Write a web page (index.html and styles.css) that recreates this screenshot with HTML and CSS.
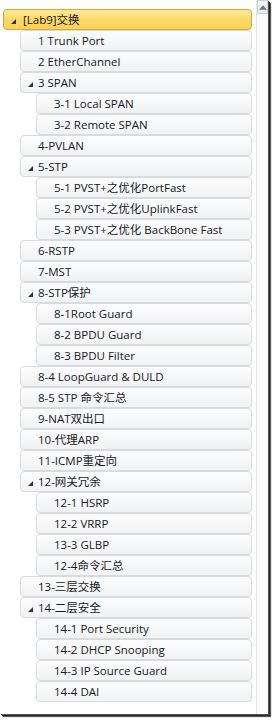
FILE: index.html
```html
<!DOCTYPE html>
<html>
<head>
<meta charset="utf-8">
<link rel="stylesheet" href="styles.css">
</head>
<body>
<div class="window">
  <div class="tree">
    <div class="node l0 sel"><svg class="tri" viewBox="0 0 5 5"><polygon points="5,0 5,5 0,5"/></svg><span class="txt">[Lab9]交换</span></div>
    <div class="node l1"><span class="txt">1 Trunk Port</span></div>
    <div class="node l1"><span class="txt">2 EtherChannel</span></div>
    <div class="node l1"><svg class="tri" viewBox="0 0 5 5"><polygon points="5,0 5,5 0,5"/></svg><span class="txt">3 SPAN</span></div>
    <div class="node l2"><span class="txt">3-1 Local SPAN</span></div>
    <div class="node l2"><span class="txt">3-2 Remote SPAN</span></div>
    <div class="node l1"><span class="txt">4-PVLAN</span></div>
    <div class="node l1"><svg class="tri" viewBox="0 0 5 5"><polygon points="5,0 5,5 0,5"/></svg><span class="txt">5-STP</span></div>
    <div class="node l2"><span class="txt">5-1 PVST+之优化PortFast</span></div>
    <div class="node l2"><span class="txt">5-2 PVST+之优化UplinkFast</span></div>
    <div class="node l2"><span class="txt">5-3 PVST+之优化 BackBone Fast</span></div>
    <div class="node l1"><span class="txt">6-RSTP</span></div>
    <div class="node l1"><span class="txt">7-MST</span></div>
    <div class="node l1"><svg class="tri" viewBox="0 0 5 5"><polygon points="5,0 5,5 0,5"/></svg><span class="txt">8-STP保护</span></div>
    <div class="node l2"><span class="txt">8-1Root Guard</span></div>
    <div class="node l2"><span class="txt">8-2 BPDU Guard</span></div>
    <div class="node l2"><span class="txt">8-3 BPDU Filter</span></div>
    <div class="node l1"><span class="txt">8-4 LoopGuard &amp; DULD</span></div>
    <div class="node l1"><span class="txt">8-5 STP 命令汇总</span></div>
    <div class="node l1"><span class="txt">9-NAT双出口</span></div>
    <div class="node l1"><span class="txt">10-代理ARP</span></div>
    <div class="node l1"><span class="txt">11-ICMP重定向</span></div>
    <div class="node l1"><svg class="tri" viewBox="0 0 5 5"><polygon points="5,0 5,5 0,5"/></svg><span class="txt">12-网关冗余</span></div>
    <div class="node l2"><span class="txt">12-1 HSRP</span></div>
    <div class="node l2"><span class="txt">12-2 VRRP</span></div>
    <div class="node l2"><span class="txt">13-3 GLBP</span></div>
    <div class="node l2"><span class="txt">12-4命令汇总</span></div>
    <div class="node l1"><span class="txt">13-三层交换</span></div>
    <div class="node l1"><svg class="tri" viewBox="0 0 5 5"><polygon points="5,0 5,5 0,5"/></svg><span class="txt">14-二层安全</span></div>
    <div class="node l2"><span class="txt">14-1 Port Security</span></div>
    <div class="node l2"><span class="txt">14-2 DHCP Snooping</span></div>
    <div class="node l2"><span class="txt">14-3 IP Source Guard</span></div>
    <div class="node l2"><span class="txt">14-4 DAI</span></div>
  </div>
  <div class="scrollbar">
    <div class="sb-btn"><svg viewBox="0 0 9 5"><polygon points="0,5 9,5 4.5,0"/></svg></div>
  </div>
</div>
</body>
</html>
```

FILE: styles.css
```css
html, body {
  margin: 0;
  padding: 0;
  background: #ffffff;
}
body {
  width: 272px;
  height: 720px;
  font-family: "Open Sans", "Noto Sans CJK SC", sans-serif;
  font-size: 11.5px;
  color: #16191d;
}
.window {
  width: 268px;
  height: 714px;
  background: #ffffff;
  display: flex;
  box-shadow: 1px 1px 0 #555, 2px 2px 1px #222, 3px 3px 1px #666;
}
.tree {
  flex: 1;
  display: flex;
  flex-direction: column;
  padding: 9px 4px 0 3px;
}
.node {
  height: 21px;
  box-sizing: border-box;
  border: 1px solid #d8dadd;
  border-radius: 4px;
  background: linear-gradient(#fdfdfe, #f1f2f4);
  display: flex;
  align-items: center;
  position: relative;
  white-space: nowrap;
}
.node .tri {
  position: absolute;
  width: 5px;
  height: 5px;
  fill: #333333;
  top: 9px;
}
.l0 { margin-left: 0; }
.l0 .txt { padding-left: 19px; }
.l0 .tri { left: 7px; }
.l1 { margin-left: 17px; }
.l1 .txt { padding-left: 17px; }
.l1 .tri { left: 7px; }
.l2 { margin-left: 33px; }
.l2 .txt { padding-left: 17px; }
.sel {
  border-color: #d4a838;
  background: linear-gradient(#fde89a, #fcd866 55%, #fbd25a);
}
.txt {
  line-height: 19px;
}
.scrollbar {
  width: 11px;
  border-left: 1px solid #e4e6ea;
  background: #fafafa;
}
.sb-btn {
  height: 14px;
  box-sizing: border-box;
  border: 1px solid #cfd3d9;
  background: linear-gradient(#f6f7f9, #e6e9ee);
  display: flex;
  align-items: center;
  justify-content: center;
}
.sb-btn svg {
  width: 8px;
  height: 5px;
  fill: #6b7585;
}
```
